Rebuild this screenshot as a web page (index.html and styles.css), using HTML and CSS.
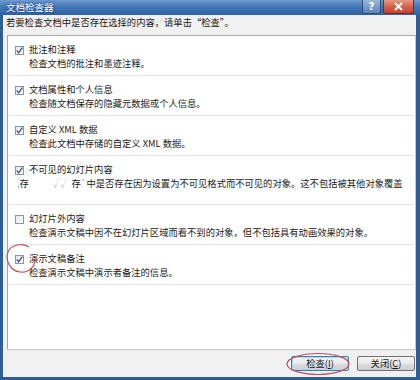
FILE: index.html
```html
<!DOCTYPE html>
<html lang="zh-CN">
<head>
    <meta charset="UTF-8">
    <title>文档检查器</title>
    <link rel="stylesheet" href="styles.css">
</head>
<body>
    <div class="window">
        <div class="titlebar">
            <span class="title">文档检查器</span>
            <div class="caption-buttons">
                <span class="cap-btn help">?</span>
                <span class="cap-btn close">
                    <svg width="11" height="9" viewBox="0 0 11 9"><path d="M2 1 L9 8 M9 1 L2 8" stroke="#fff" stroke-width="2"/></svg>
                </span>
            </div>
        </div>
        <div class="frame">
            <div class="client">
                <p class="intro">若要检查文档中是否存在选择的内容，请单击“检查”。</p>
                <div class="panel">
                    <div class="item">
                        <div class="item-head">
                            <span class="check"><svg width="9" height="9" viewBox="0 0 9 9"><path d="M1.8 4.4 L3.6 6.8 L7.4 1.6" fill="none" stroke="#3a5a8e" stroke-width="1.3"/></svg></span>
                            <span class="item-title">批注和注释</span>
                        </div>
                        <div class="item-desc">检查文档的批注和墨迹注释。</div>
                    </div>
                    <div class="item">
                        <div class="item-head">
                            <span class="check"><svg width="9" height="9" viewBox="0 0 9 9"><path d="M1.8 4.4 L3.6 6.8 L7.4 1.6" fill="none" stroke="#3a5a8e" stroke-width="1.3"/></svg></span>
                            <span class="item-title">文档属性和个人信息</span>
                        </div>
                        <div class="item-desc">检查随文档保存的隐藏元数据或个人信息。</div>
                    </div>
                    <div class="item">
                        <div class="item-head">
                            <span class="check"><svg width="9" height="9" viewBox="0 0 9 9"><path d="M1.8 4.4 L3.6 6.8 L7.4 1.6" fill="none" stroke="#3a5a8e" stroke-width="1.3"/></svg></span>
                            <span class="item-title">自定义 XML 数据</span>
                        </div>
                        <div class="item-desc">检查此文档中存储的自定义 XML 数据。</div>
                    </div>
                    <div class="item item-tall">
                        <div class="item-head">
                            <span class="check"><svg width="9" height="9" viewBox="0 0 9 9"><path d="M1.8 4.4 L3.6 6.8 L7.4 1.6" fill="none" stroke="#3a5a8e" stroke-width="1.3"/></svg></span>
                            <span class="item-title">不可见的幻灯片内容</span>
                        </div>
                        <div class="item-desc garbled"><span class="smudge">,</span>存<span class="ticks">√√</span>存<span class="smudge">`</span>中是否存在因为设置为不可见格式而不可见的对象。这不包括被其他对象覆盖</div>
                    </div>
                    <div class="item">
                        <div class="item-head">
                            <span class="check"></span>
                            <span class="item-title">幻灯片外内容</span>
                        </div>
                        <div class="item-desc">检查演示文稿中因不在幻灯片区域而看不到的对象，但不包括具有动画效果的对象。</div>
                    </div>
                    <div class="item">
                        <div class="item-head">
                            <span class="check"><svg width="9" height="9" viewBox="0 0 9 9"><path d="M1.8 4.4 L3.6 6.8 L7.4 1.6" fill="none" stroke="#3a5a8e" stroke-width="1.3"/></svg></span>
                            <span class="item-title">演示文稿备注</span>
                        </div>
                        <div class="item-desc">检查演示文稿中演示者备注的信息。</div>
                    </div>
                </div>
                <div class="footer">
                    <button class="btn btn-default">检查(<u>I</u>)</button>
                    <button class="btn">关闭(<u>C</u>)</button>
                </div>
            </div>
        </div>
        <!-- red annotation marks drawn over the dialog -->
        <svg class="mark mark-check" width="32" height="31" viewBox="0 0 32 31">
            <path d="M24 4 C18 0 6 1 3 9 C0 17 5 28 15 29 C24 30 30 24 30 16" fill="none" stroke="#c8505a" stroke-width="1.2"/>
        </svg>
        <svg class="mark mark-btn" width="64" height="24" viewBox="0 0 64 24">
            <ellipse cx="32" cy="12" rx="31" ry="10.5" fill="none" stroke="#c8505a" stroke-width="1.2"/>
        </svg>
    </div>
</body>
</html>
```

FILE: styles.css
```css
body {
    margin: 0;
    padding: 0;
    font-family: "Noto Sans CJK SC", "Liberation Sans", sans-serif;
    font-size: 9.3px;
    color: #1a1a1a;
}
.window {
    position: relative;
    width: 420px;
    height: 380px;
    display: flex;
    flex-direction: column;
    background-color: #2f5f92;
}
.titlebar {
    height: 15px;
    display: flex;
    align-items: flex-start;
    background: linear-gradient(to bottom, #6f9bd0 0%, #4478b6 45%, #2f62a2 100%);
}
.title {
    color: #fff;
    font-size: 9.5px;
    line-height: 14px;
    padding-left: 6px;
    text-shadow: 0 0 2px #1d4c8c, 0 0 3px #1d4c8c;
}
.caption-buttons {
    margin-left: auto;
    display: flex;
    gap: 2px;
    padding-right: 6px;
}
.cap-btn {
    height: 14px;
    display: flex;
    align-items: center;
    justify-content: center;
    border: 1px solid #2a4f7c;
    border-top: none;
    box-sizing: border-box;
    border-radius: 0 0 3px 3px;
}
.help {
    width: 19px;
    color: #fff;
    font-family: "DejaVu Sans", sans-serif;
    font-weight: bold;
    font-size: 10px;
    background: linear-gradient(to bottom, #9ab8da, #5f86b6);
}
.close {
    width: 31px;
    border-color: #7a2a22;
    background: linear-gradient(to bottom, #e59a86 0%, #d6604a 50%, #c2432f 100%);
}
.frame {
    flex: 1;
    display: flex;
    padding: 0 4px 3px 3px;
}
.client {
    flex: 1;
    display: flex;
    flex-direction: column;
    background-color: #f0f0f0;
    padding: 0 0 0 4px;
}
.intro {
    margin: 0 0 6px -1px;
    line-height: 14px;
    height: 14px;
}
.panel {
    flex: 1;
    background-color: #fff;
    border: 1px solid #a9a9a9;
    border-bottom-color: #c8c8c8;
    border-right-color: #c8c8c8;
}
.item {
    margin: 0 2px;
    padding: 6px 0 5px 5px;
    border-bottom: 1px solid #e6e6e6;
}
.item-tall {
    padding-bottom: 14px;
}
.item-head {
    display: flex;
    align-items: center;
    gap: 5px;
    line-height: 14px;
    height: 14px;
}
.check {
    width: 9px;
    height: 9px;
    margin-top: 3px;
    border: 1px solid #8a96a8;
    box-sizing: border-box;
    background: linear-gradient(135deg, #e4e8ee, #fbfbfb);
    display: flex;
}
.check svg {
    margin: -1px;
}
.item-desc {
    padding-left: 14px;
    line-height: 14px;
    height: 14px;
    white-space: nowrap;
}
.garbled {
    padding-left: 2px;
}
.smudge {
    color: #9a9a9a;
}
.ticks {
    color: #b4c4d8;
    letter-spacing: -2px;
    margin: 0 4px 0 24px;
}
.footer {
    height: 27px;
    display: flex;
    align-items: center;
    justify-content: flex-end;
    gap: 8px;
    padding-right: 1px;
}
.btn {
    height: 15px;
    width: 58px;
    padding: 0;
    font-family: "Noto Sans CJK SC", "Liberation Sans", sans-serif;
    font-size: 9.3px;
    line-height: 13px;
    color: #1a1a1a;
    border: 1px solid #707070;
    border-radius: 2px;
    background: linear-gradient(to bottom, #f4f4f4 0%, #ebebeb 50%, #dddddd 51%, #cfcfcf 100%);
}
.btn-default {
    border-color: #3c7fb1;
    box-shadow: inset 0 0 0 1px #a8d8f0;
}
.btn u {
    text-underline-offset: 1px;
}
.mark {
    position: absolute;
}
.mark-check {
    left: 5px;
    top: 243px;
}
.mark-btn {
    left: 286px;
    top: 352px;
}
```
